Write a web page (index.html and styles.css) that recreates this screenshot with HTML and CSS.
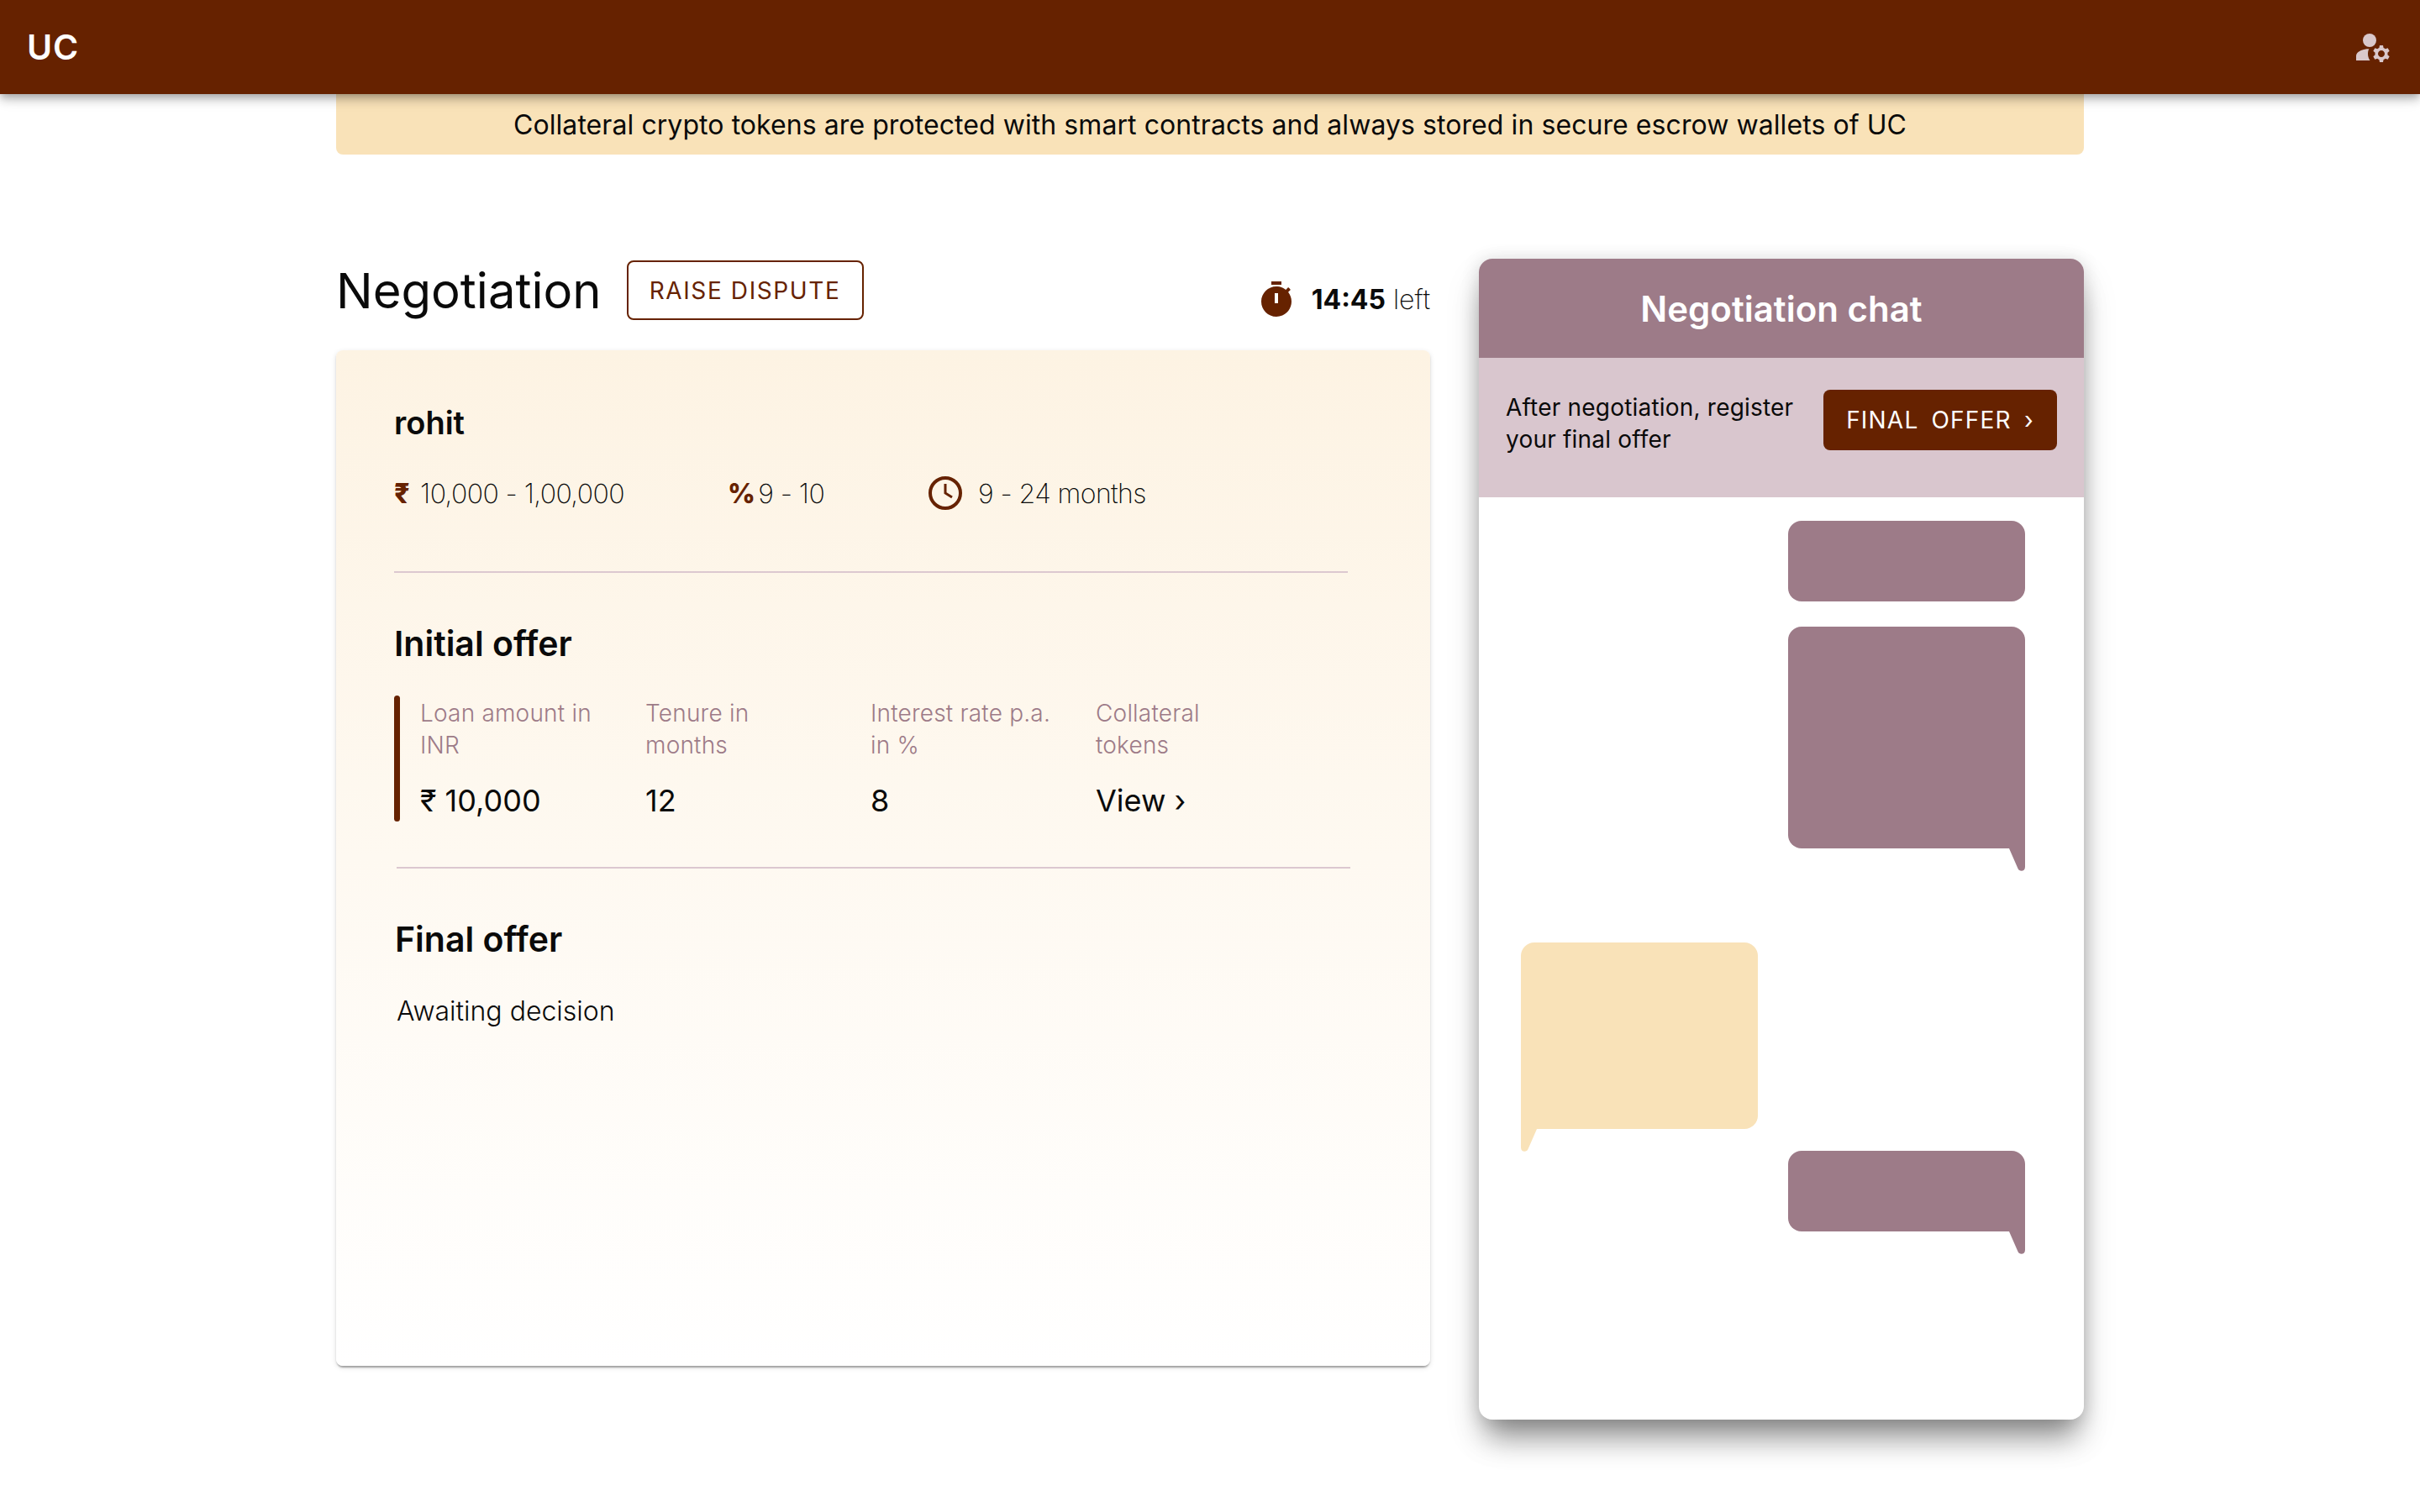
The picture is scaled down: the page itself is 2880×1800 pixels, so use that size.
FILE: index.html
```html
<!DOCTYPE html>
<html lang="en">
<head>
  <meta charset="UTF-8" />
  <title>UC - Negotiation</title>
  <link rel="stylesheet" href="styles.css">
</head>
<body>

  <!-- Top bar -->
  <header class="topbar">
    <div class="brand">UC</div>
    <svg class="account-icon" viewBox="0 0 24 24" width="48" height="48">
      <circle cx="10" cy="8" r="4"></circle>
      <path d="M10.67 13.02c-.22-.01-.44-.02-.67-.02-2.42 0-4.68.67-6.61 1.82-.88.52-1.39 1.5-1.39 2.53V20h8.26c-.79-1.13-1.26-2.51-1.26-4 0-1.07.25-2.07.67-2.98z"></path>
      <path d="M20.75 16c0-.22-.03-.42-.06-.63l1.14-1.01-1-1.73-1.45.49c-.32-.27-.68-.48-1.08-.63L18 11h-2l-.3 1.49c-.4.15-.76.36-1.08.63l-1.45-.49-1 1.73 1.14 1.01c-.03.21-.06.41-.06.63s.03.42.06.63l-1.14 1.01 1 1.73 1.45-.49c.32.27.68.48 1.08.63L16 21h2l.3-1.49c.4-.15.76-.36 1.08-.63l1.45.49 1-1.73-1.14-1.01c.03-.21.06-.41.06-.63zM17 18c-1.1 0-2-.9-2-2s.9-2 2-2 2 .9 2 2-.9 2-2 2z"></path>
    </svg>
  </header>

  <main class="page">
    <div class="notice">Collateral crypto tokens are protected with smart contracts and always stored in secure escrow wallets of UC</div>

    <div class="columns">

      <!-- Negotiation details -->
      <section class="details">
        <div class="title-row">
          <h1>Negotiation</h1>
          <button class="btn-outline">RAISE DISPUTE</button>
          <div class="timer">
            <svg viewBox="0 0 24 24" width="48" height="48">
              <path d="M9 1h6v2H9z"></path>
              <path fill-rule="evenodd" d="M19.03 7.39l1.42-1.42c-.43-.51-.9-.99-1.41-1.41l-1.42 1.42C16.07 4.74 14.12 4 12 4c-4.97 0-9 4.03-9 9s4.02 9 9 9 9-4.03 9-9c0-2.12-.74-4.07-1.97-5.61zM13 14h-2V8h2v6z"></path>
            </svg>
            <span><b>14:45</b> left</span>
          </div>
        </div>

        <div class="offer-card">
          <h3 class="lender">rohit</h3>
          <div class="range-row">
            <div class="range range-amount"><span class="range-sign">₹</span>10,000 - 1,00,000</div>
            <div class="range range-rate"><span class="range-sign">%</span>9 - 10</div>
            <div class="range range-tenure">
              <svg viewBox="0 0 44 44" width="44" height="44">
                <circle cx="22" cy="22" r="18"></circle>
                <polyline class="hand" points="22,11 22,22 30,27"></polyline>
              </svg>
              9 - 24 months
            </div>
          </div>
          <hr class="rule">

          <h2>Initial offer</h2>
          <div class="offer-row">
            <div class="offer-bar"></div>
            <div class="offer-grid">
              <div class="offer-col">
                <div class="offer-label">Loan amount in<br>INR</div>
                <div class="offer-value">₹ 10,000</div>
              </div>
              <div class="offer-col">
                <div class="offer-label">Tenure in<br>months</div>
                <div class="offer-value">12</div>
              </div>
              <div class="offer-col">
                <div class="offer-label">Interest rate p.a.<br>in %</div>
                <div class="offer-value">8</div>
              </div>
              <div class="offer-col">
                <div class="offer-label">Collateral<br>tokens</div>
                <div class="offer-value">View ›</div>
              </div>
            </div>
          </div>

          <div class="final">
            <hr class="rule">
            <h2>Final offer</h2>
            <p class="final-status">Awaiting decision</p>
          </div>
        </div>
      </section>

      <!-- Chat -->
      <aside class="chat">
        <div class="chat-head">Negotiation chat</div>
        <div class="chat-strip">
          <p>After negotiation, register your final offer</p>
          <button class="btn-solid">FINAL OFFER ›</button>
        </div>
        <div class="chat-list">
          <div class="bubble mine bubble-first"></div>
          <div class="bubble mine bubble-tall tail"></div>
          <div class="bubble theirs tail"></div>
          <div class="bubble mine bubble-last tail"></div>
        </div>
      </aside>

    </div>
  </main>

</body>
</html>
```

FILE: styles.css
```css
body {
  margin: 0;
  font-family: 'Inter', sans-serif;
  color: #0a0a0a;
  background: #fff;
}

.topbar {
  position: relative;
  z-index: 2;
  height: 112px;
  padding: 0 32px;
  display: flex;
  align-items: center;
  justify-content: space-between;
  background: #662200;
  box-shadow: 0 4px 8px -2px rgba(0, 0, 0, 0.2), 0 8px 10px rgba(0, 0, 0, 0.14), 0 2px 20px rgba(0, 0, 0, 0.12);
}

.brand {
  color: #fff;
  font-size: 41px;
  font-weight: 600;
  letter-spacing: 0.8px;
}

.account-icon {
  fill: #d9c8cb;
}

.page {
  width: 2080px;
  margin: 0 auto;
  padding-bottom: 110px;
}

.notice {
  height: 72px;
  line-height: 74px;
  text-align: center;
  font-size: 32px;
  letter-spacing: 0.07px;
  background: #f9e2b8;
  border-radius: 0 0 8px 8px;
}

.columns {
  display: flex;
  gap: 58px;
  padding-top: 124px;
}

.details {
  width: 1302px;
  padding-top: 2px;
}

.title-row {
  display: flex;
  align-items: center;
  height: 71px;
  margin-bottom: 36px;
}

h1 {
  margin: 0 30px 0 0;
  font-size: 58px;
  font-weight: 400;
}

.btn-outline {
  width: 282px;
  height: 71px;
  padding: 0;
  font-family: inherit;
  font-size: 28px;
  font-weight: 400;
  letter-spacing: 1.6px;
  color: #662200;
  background: #fff;
  border: 2px solid #662200;
  border-radius: 8px;
}

.timer {
  margin-left: auto;
  padding-top: 22px;
  display: flex;
  align-items: center;
  gap: 18px;
  font-size: 32px;
  font-weight: 200;
}

.timer svg {
  fill: #662200;
}

.timer b {
  font-weight: 700;
}

.offer-card {
  box-sizing: border-box;
  height: 1209px;
  padding: 62px 98px 0 69px;
  background: linear-gradient(180deg, #fdf3e3 0%, #ffffff 100%);
  border-radius: 8px;
  box-shadow: 0 4px 2px -2px rgba(0, 0, 0, 0.2), 0 2px 2px rgba(0, 0, 0, 0.14), 0 2px 6px rgba(0, 0, 0, 0.12);
}

.lender {
  margin: 0;
  font-size: 38px;
  line-height: 48px;
  font-weight: 600;
}

.range-row {
  display: flex;
  height: 44px;
  margin-top: 38px;
  font-size: 32px;
  font-weight: 200;
  letter-spacing: -0.6px;
}

.range {
  display: flex;
  align-items: center;
}

.range-amount {
  width: 397px;
}

.range-rate {
  width: 237px;
}

.range-sign {
  color: #662200;
  font-weight: 800;
  margin-right: 13px;
}

.range-rate .range-sign {
  margin-right: 4px;
}

.range-tenure svg {
  margin-right: 17px;
  fill: none;
  stroke: #662200;
  stroke-width: 4;
}

.hand {
  stroke-width: 3;
}

.rule {
  height: 2px;
  margin: 0;
  border: 0;
  background: #dcc8d0;
}

.range-row + .rule {
  margin-top: 71px;
}

h2 {
  margin: 0;
  font-size: 41px;
  line-height: 52px;
  font-weight: 600;
}

.offer-card > h2 {
  margin-top: 58px;
}

.offer-row {
  display: flex;
  gap: 24px;
  height: 150px;
  margin-top: 36px;
}

.offer-bar {
  width: 7px;
  border-radius: 4px;
  background: #662200;
}

.offer-grid {
  display: grid;
  grid-template-columns: repeat(4, 268px);
}

.offer-label {
  height: 76px;
  margin-top: 2px;
  font-size: 28px;
  line-height: 38px;
  font-weight: 300;
  letter-spacing: 0.2px;
  color: #9d7b88;
}

.offer-value {
  margin-top: 23px;
  font-size: 36px;
  line-height: 48px;
}

.final {
  margin: 54px -3px 0 3px;
}

.final h2 {
  margin: 58px 0 0 -2px;
}

.final-status {
  margin: 38px 0 0;
  font-size: 32px;
  line-height: 44px;
  font-weight: 300;
}

.chat {
  width: 720px;
  height: 1382px;
  border-radius: 16px;
  background: #fff;
  box-shadow: 0 30px 34px -10px rgba(0, 0, 0, 0.36), 0 22px 44px 0 rgba(0, 0, 0, 0.12), 0 2px 20px 2px rgba(0, 0, 0, 0.12);
}

.chat-head {
  height: 118px;
  line-height: 120px;
  text-align: center;
  color: #fff;
  font-size: 42px;
  font-weight: 600;
  background: #9d7b88;
  border-radius: 16px 16px 0 0;
}

.chat-strip {
  box-sizing: border-box;
  height: 166px;
  padding: 40px 32px 0;
  display: flex;
  align-items: flex-start;
  justify-content: space-between;
  background: #d9c6ce;
}

.chat-strip p {
  width: 360px;
  margin: 0;
  font-size: 28px;
  line-height: 38px;
  letter-spacing: 0.2px;
}

.btn-solid {
  width: 278px;
  height: 72px;
  margin-top: -2px;
  padding: 0;
  font-family: inherit;
  font-size: 28px;
  font-weight: 400;
  letter-spacing: 1.2px;
  word-spacing: 6px;
  color: #fff;
  background: #662200;
  border: 0;
  border-radius: 8px;
}

.chat-list {
  display: flex;
  flex-direction: column;
  padding: 28px 70px 0 50px;
}

.bubble {
  position: relative;
  width: 282px;
  height: 96px;
  border-radius: 16px;
}

.mine {
  align-self: flex-end;
  background: #9d7b88;
}

.theirs {
  align-self: flex-start;
  height: 222px;
  margin-top: 112px;
  background: #f9e2b8;
  border-bottom-left-radius: 0;
}

.bubble-tall {
  height: 264px;
  margin-top: 30px;
  border-bottom-right-radius: 0;
}

.bubble-last {
  margin-top: 26px;
  border-bottom-right-radius: 0;
}

.tail::after {
  content: "";
  position: absolute;
  top: 100%;
  width: 19px;
  height: 27px;
  background: inherit;
}

.mine.tail::after {
  right: 0;
  clip-path: path('M0 0H19V22C19 28 12 28 10.5 24Z');
}

.theirs.tail::after {
  left: 0;
  clip-path: path('M19 0H0V22C0 28 7 28 8.5 24Z');
}
```
